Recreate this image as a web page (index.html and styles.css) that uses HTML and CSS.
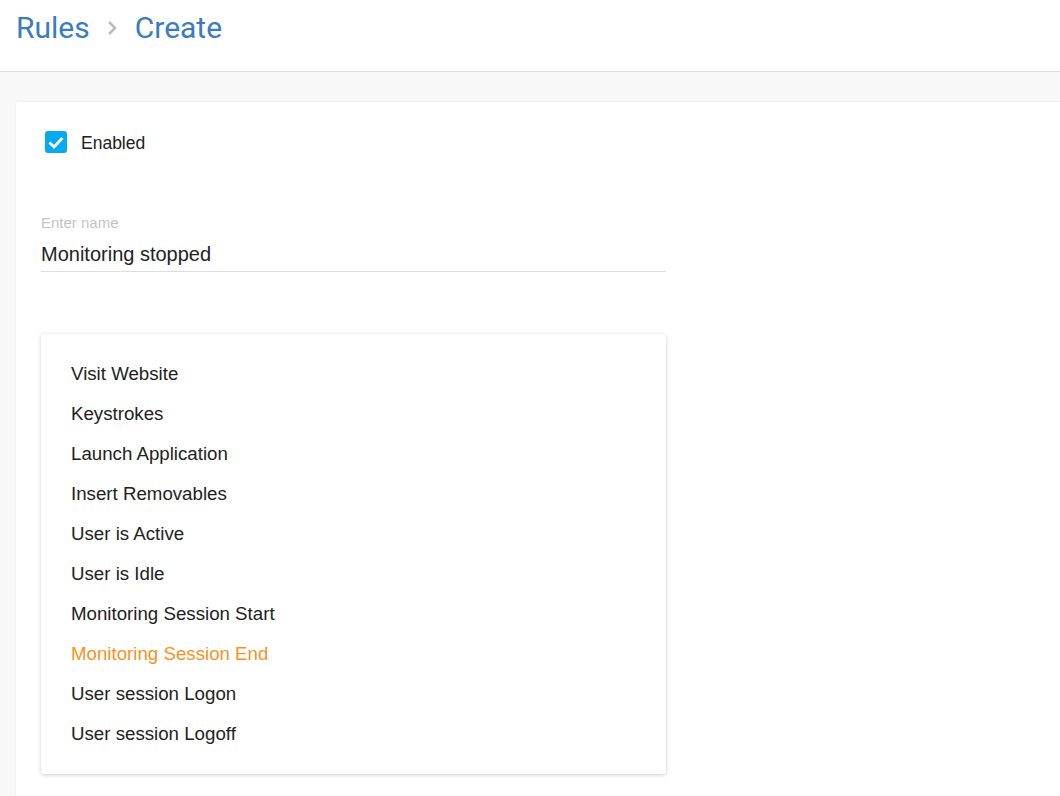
FILE: index.html
```html
<!DOCTYPE html>
<html lang="en">
    <head>
        <meta charset="UTF-8">
        <meta name="viewport" content="width=device-width, initial-scale=1.0">
        <link rel="stylesheet" href="styles.css">
        <title>Rules - Create</title>
    </head>
    <body>
        <header class="page-header">
            <h1 class="crumbs">
                <span class="crumb">Rules</span>
                <svg class="crumb-sep" viewBox="0 0 12 16" width="12" height="16">
                    <path d="M3 2l6 6-6 6" fill="none" stroke="#bbbbbb" stroke-width="2.6"/>
                </svg>
                <span class="crumb">Create</span>
            </h1>
        </header>

        <main class="page-body">
            <section class="card">
                <label class="check-row">
                    <span class="checkbox">
                        <svg viewBox="0 0 22 22" width="22" height="22">
                            <path d="M4.5 11.5l4.5 4.5 8.5-9" fill="none" stroke="#fff" stroke-width="2.8"/>
                        </svg>
                    </span>
                    <span class="check-label">Enabled</span>
                </label>

                <div class="field">
                    <div class="field-label">Enter name</div>
                    <div class="field-value">Monitoring stopped</div>
                </div>

                <ul class="menu">
                    <li>Visit Website</li>
                    <li>Keystrokes</li>
                    <li>Launch Application</li>
                    <li>Insert Removables</li>
                    <li>User is Active</li>
                    <li>User is Idle</li>
                    <li>Monitoring Session Start</li>
                    <li class="selected">Monitoring Session End</li>
                    <li>User session Logon</li>
                    <li>User session Logoff</li>
                </ul>
            </section>
        </main>
    </body>
</html>
```

FILE: styles.css
```css
html, body {
    margin: 0;
    height: 100%;
}

body {
    font-family: 'Liberation Sans', Arial, sans-serif;
    color: #222;
    background-color: #f8f8f8;
    overflow: hidden;
}

.page-header {
    height: 71px;
    background-color: #fff;
    border-bottom: 1px solid #dcdcdc;
    display: flex;
    align-items: center;
    padding-left: 16px;
}

.crumbs {
    margin: 0 0 16px 0;
    display: flex;
    align-items: center;
    font-family: Roboto, sans-serif;
    font-weight: 400;
    font-size: 30px;
    color: #3b7cbf;
}

.crumb-sep {
    margin: 1px 17px 0 16px;
}

.page-body {
    padding: 30px 0 0 16px;
}

.card {
    background-color: #fff;
    margin-right: -60px;
    height: 760px;
    border-radius: 3px;
    box-shadow: 0 0 3px rgba(0, 0, 0, 0.06);
    padding: 29px 25px 0 25px;
}

.check-row {
    display: flex;
    align-items: center;
    height: 22px;
}

.checkbox {
    width: 22px;
    height: 22px;
    margin-left: 4px;
    border-radius: 3px;
    background-color: #03a9f4;
    display: flex;
    align-items: center;
    justify-content: center;
}

.check-label {
    margin-left: 14px;
    margin-top: 2px;
    font-size: 17.5px;
}

.field {
    width: 625px;
    margin-top: 62px;
    border-bottom: 1px solid #dedede;
}

.field-label {
    font-size: 15px;
    color: #c4c4c4;
    line-height: 16px;
}

.field-value {
    font-size: 20px;
    line-height: 24px;
    margin-top: 11px;
    padding-bottom: 5px;
}

.menu {
    list-style: none;
    width: 625px;
    margin: 62px 0 0 0;
    padding: 20px 0 20px 0;
    background-color: #fff;
    border-radius: 3px;
    box-shadow: 0 1px 4px rgba(0, 0, 0, 0.2);
}

.menu li {
    height: 40px;
    line-height: 40px;
    padding-left: 30px;
    font-size: 18.7px;
}

.menu li.selected {
    color: #f7931e;
}
```
